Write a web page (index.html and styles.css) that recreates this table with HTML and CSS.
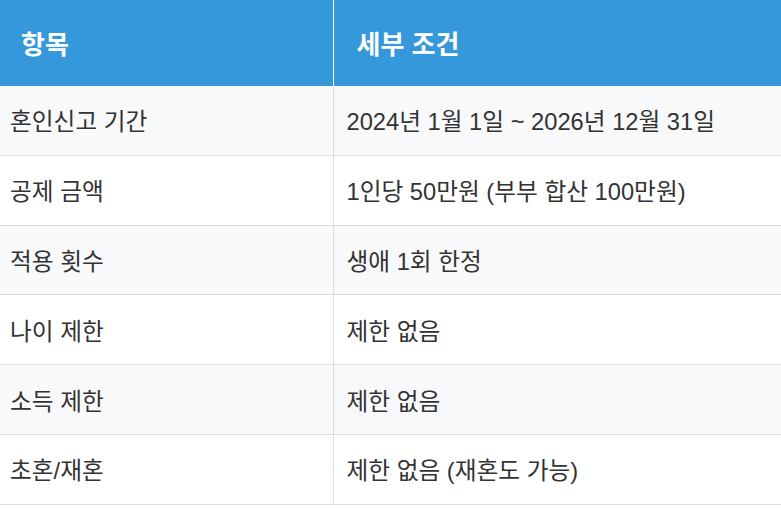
FILE: index.html
```html
<!DOCTYPE html>
<html lang="ko">
<head>
<meta charset="utf-8">
<link rel="stylesheet" href="styles.css">
</head>
<body>
<table class="info-table">
  <thead>
    <tr><th class="col-item">항목</th><th class="col-detail">세부 조건</th></tr>
  </thead>
  <tbody>
    <tr><td class="col-item">혼인신고 기간</td><td class="col-detail">2024년 1월 1일 ~ 2026년 12월 31일</td></tr>
    <tr><td class="col-item">공제 금액</td><td class="col-detail">1인당 50만원 (부부 합산 100만원)</td></tr>
    <tr><td class="col-item">적용 횟수</td><td class="col-detail">생애 1회 한정</td></tr>
    <tr><td class="col-item">나이 제한</td><td class="col-detail">제한 없음</td></tr>
    <tr><td class="col-item">소득 제한</td><td class="col-detail">제한 없음</td></tr>
    <tr><td class="col-item">초혼/재혼</td><td class="col-detail">제한 없음 (재혼도 가능)</td></tr>
  </tbody>
</table>
</body>
</html>
```
FILE: styles.css
```css
html, body {
  margin: 0;
  padding: 0;
  background: #ffffff;
}
.info-table {
  border-collapse: collapse;
  width: 785px;
  margin-left: -2px;
  font-family: "Liberation Sans", Arial, "Noto Sans CJK KR", sans-serif;
  font-size: 23.7px;
  color: #333333;
  table-layout: fixed;
}
.info-table th {
  background: #3498db;
  color: #ffffff;
  font-weight: bold;
  font-size: 26px;
  text-align: left;
  height: 85.5px;
  padding: 0 0 0 23px;
  border-right: 1px solid #ffffff;
  box-sizing: border-box;
}
.info-table th:last-child { border-right: none; }
.info-table th.col-item { width: 335px; }
.info-table td {
  height: 69.8px;
  padding: 0 0 0 13px;
  border-bottom: 1px solid #dddddd;
  border-right: 1px solid #dddddd;
  vertical-align: middle;
  box-sizing: border-box;
}
.info-table td:last-child { border-right: none; }
.info-table tbody tr:nth-child(odd) td { background: #f8f9fa; }
.info-table tbody tr:nth-child(even) td { background: #ffffff; }
.info-table td.col-item { padding-left: 12px; }
```
